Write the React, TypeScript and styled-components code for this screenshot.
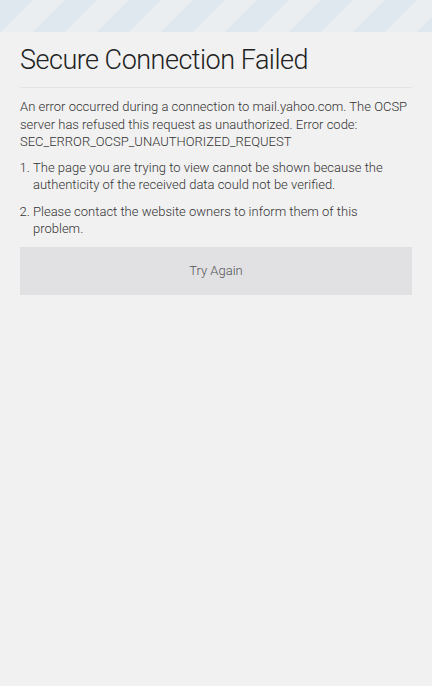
import React from 'react'
import styled, { createGlobalStyle } from 'styled-components'

const GlobalStyle = createGlobalStyle`
  html, body {
    margin: 0;
    padding: 0;
    background: #f1f1f1;
  }
  body {
    font-family: Roboto, "Noto Sans", sans-serif;
    font-weight: 300;
    color: #333;
  }
`

const Page = styled.div`
  min-height: 686px;
  background: #f1f1f1;
`

const StripeBar = styled.div`
  height: 32px;
  background-color: #ebeef1;
  background-image: linear-gradient(
    135deg,
    #dfe7ef 25%,
    #ebeef1 25%,
    #ebeef1 50%,
    #dfe7ef 50%,
    #dfe7ef 75%,
    #ebeef1 75%
  );
  background-size: 64px 64px;
`

const Content = styled.main`
  padding: 0 20px;
`

const Title = styled.h1`
  margin: 0;
  padding: 13px 0 12px;
  font-size: 27px;
  letter-spacing: -0.5px;
  font-weight: 300;
  line-height: 30px;
  color: #222;
  border-bottom: 1px solid #e4e4e4;
`

const Description = styled.p`
  margin: 10px 0 8px;
  font-size: 13px;
  line-height: 17.5px;
  color: #333;
`

const List = styled.ol`
  margin: 0 0 2px;
  padding: 0 20px 0 13px;
  font-size: 13px;
  line-height: 17.5px;
  color: #333;
`

const Item = styled.li`
  margin-bottom: 9px;
  &::marker {
    color: #333;
  }
`

const RetryButton = styled.button`
  display: block;
  width: 100%;
  height: 48px;
  margin-top: 0;
  border: none;
  border-radius: 0;
  background: #e1e1e4;
  font-family: Roboto, "Noto Sans", sans-serif;
  font-weight: 300;
  font-size: 13px;
  color: #555;
  cursor: pointer;
`

export default function App() {
  return (
    <Page>
      <GlobalStyle />
      <StripeBar />
      <Content>
        <Title>Secure Connection Failed</Title>
        <Description>
          An error occurred during a connection to mail.yahoo.com. The OCSP
          server has refused this request as unauthorized. Error code:
          SEC_ERROR_OCSP_UNAUTHORIZED_REQUEST
        </Description>
        <List>
          <Item>
            The page you are trying to view cannot be shown because the
            authenticity of the received data could not be verified.
          </Item>
          <Item>Please contact the website owners to inform them of this problem.</Item>
        </List>
        <RetryButton>Try Again</RetryButton>
      </Content>
    </Page>
  )
}
